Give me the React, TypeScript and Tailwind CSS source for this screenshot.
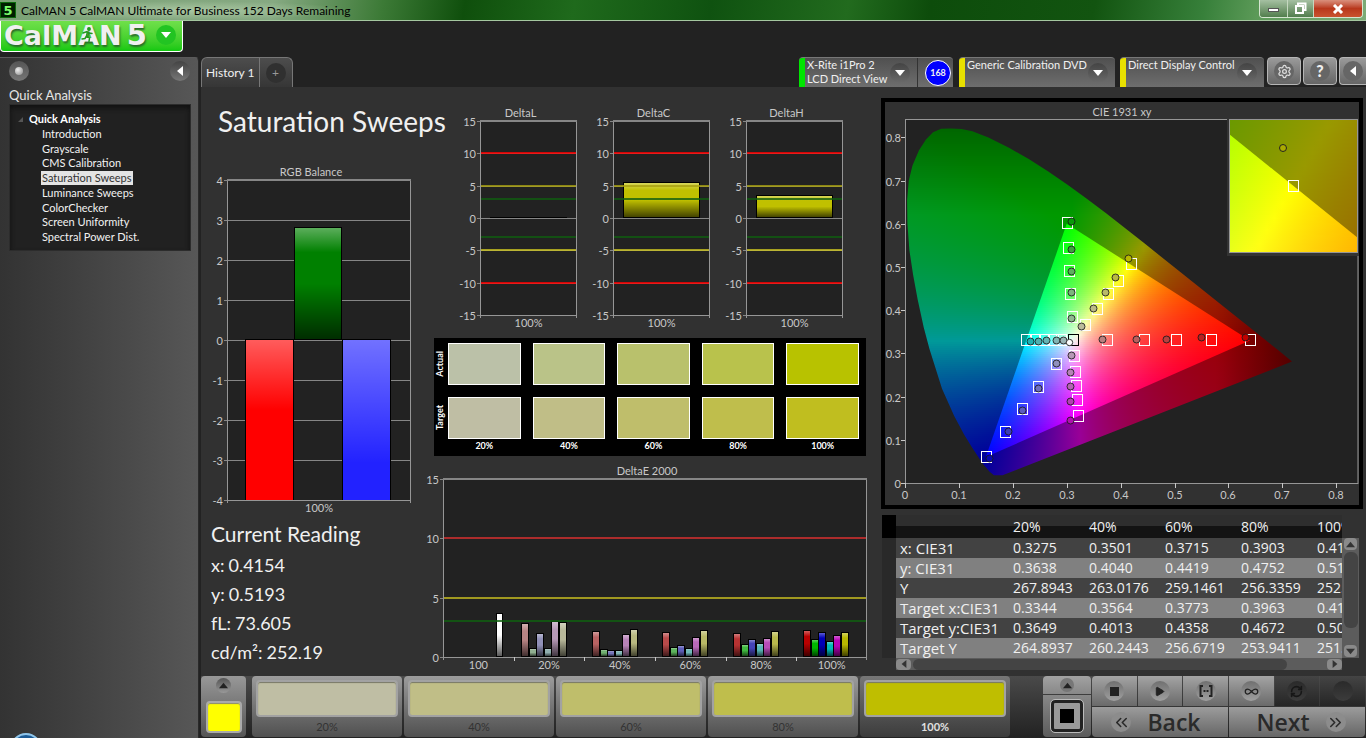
import React, { useId } from "react";
import { ChevronsLeft, ChevronsRight, Infinity as InfinityIcon, Play, RefreshCw, Settings, Square } from "lucide-react";

type Bar = { x: number; width: number; value: number; color: string };
type Limit = { value: number; color: string };

interface BarChartProps {
  title: string;
  width: number;
  height: number;
  plot: { x: number; y: number; width: number; height: number };
  min: number;
  max: number;
  ticks: number[];
  grid?: boolean;
  limits?: Limit[];
  bars: Bar[];
  labels: string[];
}

function BarChart({ title, width, height, plot, min, max, ticks, grid = true, limits = [], bars, labels }: BarChartProps) {
  const id = useId();
  const toY = (v: number) => plot.y + Math.round(((max - v) / (max - min)) * plot.height);
  const step = plot.width / labels.length;
  const right = plot.x + plot.width;
  const bottom = plot.y + plot.height;

  return (
    <svg viewBox={`0 0 ${width} ${height}`} className="block h-auto w-full font-[Lato,sans-serif] text-[11px]" fill="#c8c8c8" shapeRendering="crispEdges" role="img" aria-label={title}>
      <defs>
        <linearGradient id={`${id}-gloss`} x1="0" y1="0" x2="0" y2="1">
          <stop offset="0" stopColor="#fff" stopOpacity="0.36" />
          <stop offset="0.22" stopColor="#fff" stopOpacity="0" />
          <stop offset="0.5" stopColor="#000" stopOpacity="0" />
          <stop offset="1" stopColor="#000" stopOpacity="0.65" />
        </linearGradient>
        <clipPath id={`${id}-clip`}>
          <rect x={plot.x} y={plot.y} width={plot.width} height={plot.height} />
        </clipPath>
      </defs>
      <text x={plot.x + plot.width / 2 - 8} y={plot.y - 4} textAnchor="middle">{title}</text>
      <rect x={plot.x} y={plot.y} width={plot.width} height={plot.height} fill="#222" />
      {ticks.map((t) => (
        <g key={t}>
          <path d={`M${plot.x - 3} ${toY(t) + 0.5}H${grid ? right : plot.x}`} stroke="#868686" />
          <text x={plot.x - 4} y={toY(t) + 5} textAnchor="end">{t}</text>
        </g>
      ))}
      <g clipPath={`url(#${id}-clip)`}>
        {bars.map((b) => {
          const y = Math.min(toY(b.value), toY(0));
          const h = Math.abs(toY(b.value) - toY(0));
          return (
            <g key={b.x}>
              <rect x={plot.x + b.x} y={y - 1} width={b.width} height={h + 1} fill="#000" />
              <rect x={plot.x + b.x + 1} y={y} width={b.width - 2} height={Math.max(h - 1, 0)} fill={b.color} />
              <rect x={plot.x + b.x + 1} y={y} width={b.width - 2} height={Math.max(h - 1, 0)} fill={`url(#${id}-gloss)`} />
            </g>
          );
        })}
      </g>
      {limits.map((l) => (
        <rect key={l.value} x={plot.x} y={toY(l.value) - 1} width={plot.width} height="2" fill={l.color} opacity="0.8" />
      ))}
      <path d={`M${plot.x + 0.5} ${plot.y}V${bottom + 3}M${right - 0.5} ${plot.y}V${bottom + 3}M${plot.x} ${bottom + 0.5}H${right}`} stroke="#969696" />
      <path d={`M${plot.x} ${plot.y}H${right}`} stroke="#868686" strokeWidth="2" />
      {labels.map((l, i) => (
        <g key={l}>
          {i > 0 && <path d={`M${Math.round(plot.x + i * step) + 0.5} ${bottom}v4`} stroke="#c8c8c8" />}
          <text x={plot.x + (i + 0.5) * step} y={bottom + 12} textAnchor="middle">{l}</text>
        </g>
      ))}
    </svg>
  );
}

/* ---------- CIE diagram ---------- */

const WIDTH = 474;
const X0 = 20;
const Y0 = 381;
const SX = 539;
const SY = 432;

const locus: [number, number][] = [
  [0.181, 0.018], [0.165, 0.018], [0.157, 0.026], [0.144, 0.045], [0.1241, 0.083], [0.1096, 0.112], [0.0913, 0.155],
  [0.0687, 0.218], [0.0454, 0.31], [0.0348, 0.36], [0.0235, 0.425], [0.015, 0.482], [0.0082, 0.5384], [0.0045, 0.6], [0.0039, 0.6548],
  [0.007, 0.7], [0.0139, 0.735], [0.026, 0.77], [0.0389, 0.795], [0.052, 0.812], [0.067, 0.82], [0.085, 0.8205], [0.105, 0.8195],
  [0.125, 0.814], [0.1547, 0.8], [0.1929, 0.776], [0.2296, 0.75], [0.2658, 0.721], [0.3016, 0.6903], [0.3373, 0.6579],
  [0.3731, 0.6245], [0.4441, 0.5547], [0.5125, 0.4866], [0.5752, 0.4242], [0.627, 0.3725], [0.6658, 0.334], [0.6915, 0.3083], [0.718, 0.281],
];

function colorAt(x: number, y: number, outside: boolean) {
  const yy = Math.max(y, 0.005);
  const X = x / yy;
  const Z = (1 - x - yy) / yy;
  const lin = [3.2406 * X - 1.5372 - 0.4986 * Z, -0.9689 * X + 1.8758 + 0.0415 * Z, 0.0557 * X - 0.204 + 1.057 * Z].map((v) => Math.max(v, 0));
  const peak = Math.max(...lin) || 1;
  let level = 1;
  if (outside) {
    level = 0.6 - Math.max(0, y - 0.62) * 1 - Math.max(0, x - 0.58) * 2;
  }
  const [r, g, b] = lin.map((v) => Math.round((255 * level * v) / peak));
  return `rgb(${r},${g},${b})`;
}

interface ColorFieldProps {
  left: number;
  top: number;
  width: number;
  height: number;
  toXY: (px: number, py: number) => [number, number];
  outside?: boolean;
}

// Horizontal strips, each with its own gradient
function ColorField({ left, top, width, height, toXY, outside = false }: ColorFieldProps) {
  const id = useId();
  const rows = Array.from({ length: Math.ceil(height / 2) }, (_, i) => top + i * 2);
  const count = Math.ceil(width / 8);
  return (
    <>
      {rows.map((y) => (
        <g key={y}>
          <linearGradient id={`${id}-${y}`}>
            {Array.from({ length: count + 1 }, (_, i) => {
              const [cx, cy] = toXY(left + (i / count) * width, y + 1);
              return <stop key={i} offset={i / count} stopColor={colorAt(cx, cy, outside)} />;
            })}
          </linearGradient>
          <rect x={left} y={y} width={width} height="2" fill={`url(#${id}-${y})`} shapeRendering="crispEdges" />
        </g>
      ))}
    </>
  );
}

const targets: [number, number][] = [
  [182, 121], [183, 146], [184, 169], [185, 192], [187, 215],
  [246, 162], [233, 179], [223, 192], [212, 207], [200, 223],
  [222, 238], [259, 238], [291, 238], [326, 238], [365, 238],
  [141, 238], [150, 238], [159, 238], [168, 238], [176, 238],
  [171, 262], [153, 285], [137, 307], [120, 330], [101, 355],
  [189, 254], [190, 270], [191, 284], [192, 298], [193, 314],
];

const readings: [number, number, string][] = [
  [186, 119, "#0a9a0a"], [186, 147, "#3f9f3f"], [186, 169, "#5fae5f"], [186, 190, "#7db57d"], [186, 216, "#8fb98f"],
  [243, 156, "#b9b900"], [230, 175, "#b8b843"], [220, 190, "#b9b96a"], [208, 206, "#bbbb86"], [196, 224, "#bbbb9c"],
  [217, 237, "#bb8080"], [251, 237, "#b95f5f"], [281, 237, "#b84040"], [316, 235, "#b82020"], [360, 235, "#c00000"],
  [145, 239, "#20b2b2"], [153, 239, "#4fb0b0"], [161, 238, "#66b5b5"], [171, 238, "#82b5b5"], [178, 238, "#9ab5b5"],
  [171, 261, "#9090bd"], [153, 286, "#6f6fbf"], [137, 308, "#5c5cc0"], [123, 329, "#3c3cb8"], [104, 356, "#0808b0"],
  [186, 253, "#b798b7"], [185, 270, "#b782b7"], [185, 284, "#b564b5"], [185, 299, "#b440b4"], [185, 318, "#b010b0"],
];

function CieDiagram() {
  const id = useId();
  const toXY = (px: number, py: number): [number, number] => [(px - X0) / SX, (Y0 - py) / SY];
  const toInsetXY = (px: number, py: number): [number, number] => [0.4193 + (px - 408) / 2600, 0.5053 - (py - 84) / 2680];
  const points = (list: [number, number][]) => list.map(([x, y]) => `${X0 + x * SX},${Y0 - y * SY}`).join(" ");

  return (
    <svg viewBox={`0 0 ${WIDTH} 403`} className="block h-auto w-full font-[Lato,sans-serif] text-[11px]" fill="#c8c8c8" role="img" aria-label="CIE 1931 xy">
      <clipPath id={`${id}-locus`}><polygon points={points(locus)} /></clipPath>
      <clipPath id={`${id}-rgb`}><polygon points={points([[0.64, 0.33], [0.3, 0.6], [0.15, 0.06]])} /></clipPath>
      <clipPath id={`${id}-inset`}><polygon points="344,32 473,136 473,151 344,151" /></clipPath>

      <rect x="20" y="17" width="453" height="364" fill="#222" />
      <text x="237" y="14" textAnchor="middle">CIE 1931 xy</text>
      <g clipPath={`url(#${id}-locus)`}>
        <ColorField left={20} top={24} width={390} height={352} toXY={toXY} outside />
      </g>
      <g clipPath={`url(#${id}-rgb)`}>
        <ColorField left={98} top={118} width={270} height={240} toXY={toXY} />
      </g>

      <path d="M20.5 17V382M20 381.5H473M473 17.5V382M20 17.5H473" stroke="#969696" fill="none" />
      {[0, 1, 2, 3, 4, 5, 6, 7, 8].map((n) => {
        const x = X0 + Math.round(n * SX * 0.1);
        const y = Y0 - Math.round(n * SY * 0.1);
        return (
          <g key={n}>
            <path d={`M${x + 0.5} 381v5M16 ${y + 0.5}h4`} stroke="#c8c8c8" />
            <text x={x} y="397" textAnchor="middle">{n / 10}</text>
            <text x="16" y={y + 5} textAnchor="end">{n / 10}</text>
          </g>
        );
      })}

      <g fill="none" stroke="#fff" shapeRendering="crispEdges">
        {targets.map(([x, y]) => (
          <rect key={`${x}-${y}`} x={x - 4.5} y={y - 5.5} width="10" height="11" />
        ))}
        <rect x="183.5" y="232.5" width="10" height="11" stroke="#000" />
      </g>
      {readings.map(([x, y, c]) => (
        <circle key={`${x}-${y}`} cx={x + 0.5} cy={y + 0.5} r="3.5" fill={c} stroke="#1a1a1a" strokeOpacity="0.85" />
      ))}
      <circle cx="184.5" cy="240.5" r="3.2" fill="#fff" stroke="#333" />

      <rect x="342" y="16" width="133" height="138" fill="#333" />
      <ColorField left={344} top={17} width={129} height={134} toXY={toInsetXY} outside />
      <g clipPath={`url(#${id}-inset)`}>
        <ColorField left={344} top={17} width={129} height={134} toXY={toInsetXY} />
      </g>
      <rect x="344.5" y="17.5" width="128" height="133" fill="none" stroke="#969696" />
      <rect x="403.5" y="78.5" width="10" height="11" fill="none" stroke="#fff" />
      <circle cx="398" cy="46" r="3.5" fill="#aaaa00" stroke="#222" />
    </svg>
  );
}

/* ---------- Data ---------- */

const pages = ["Introduction", "Grayscale", "CMS Calibration", "Saturation Sweeps", "Luminance Sweeps", "ColorChecker", "Screen Uniformity", "Spectral Power Dist."];

const deltaLimits: Limit[] = [
  { value: 10, color: "#ff0000" },
  { value: 5, color: "#a8a010" },
  { value: 3, color: "#105c10" },
  { value: -3, color: "#105c10" },
  { value: -5, color: "#c8c020" },
  { value: -10, color: "#ff0000" },
];

const deltas = [
  { title: "DeltaL", value: 0.05 },
  { title: "DeltaC", value: 5.4 },
  { title: "DeltaH", value: 3.4 },
];

const sweepColors = [
  ["#b88484", "#8fae8f", "#9090b8", "#90aeae", "#b89ab8", "#b8b89a"],
  ["#b86262", "#70b070", "#7474b8", "#80b4b4", "#b882b8", "#b8b880"],
  ["#b84a4a", "#5cb45c", "#5e5eb8", "#70b8b8", "#b868b8", "#b8b866"],
  ["#b83232", "#40b840", "#4444b8", "#58b8b8", "#b84cb8", "#b8b84c"],
  ["#b80000", "#00b800", "#0000b8", "#00b8b8", "#b800b8", "#b8b800"],
];

const sweepValues = [
  [2.78, 0.64, 1.93, 0.64, 2.95, 2.86],
  [2.1, 0.56, 0.47, 0.47, 1.85, 2.27],
  [2.0, 0.8, 0.92, 0.64, 1.6, 2.2],
  [1.93, 1.0, 1.43, 1.1, 1.5, 2.1],
  [2.2, 1.43, 2.0, 1.26, 1.76, 2.0],
];

const sweepBars: Bar[] = [
  { x: 53, width: 7, value: 3.6, color: "#ffffff" },
  ...sweepValues.flatMap((group, g) =>
    group.map((value, i) => ({ x: 78 + Math.round(g * 70.5) + Math.round(i * 7.6), width: 8, value, color: sweepColors[g][i] }))
  ),
];

const levels = [
  { label: "20%", actual: "bg-[#bbc1a8]", target: "bg-[#bfbea4]" },
  { label: "40%", actual: "bg-[#bac388]", target: "bg-[#c0be87]" },
  { label: "60%", actual: "bg-[#b9c16c]", target: "bg-[#bfbe6b]" },
  { label: "80%", actual: "bg-[#b9c24c]", target: "bg-[#bfbe4c]" },
  { label: "100%", actual: "bg-[#b8c200]", target: "bg-[#c0be1f]" },
];

const thumbs = ["bg-[#bfbea4]", "bg-[#c0be87]", "bg-[#bfbe6b]", "bg-[#bfbe4c]", "bg-[#bfbe00]"];

const readingsTable = [
  ["x: CIE31", "0.3275", "0.3501", "0.3715", "0.3903", "0.4154"],
  ["y: CIE31", "0.3638", "0.4040", "0.4419", "0.4752", "0.5193"],
  ["Y", "267.8943", "263.0176", "259.1461", "256.3359", "252.1902"],
  ["Target x:CIE31", "0.3344", "0.3564", "0.3773", "0.3963", "0.4193"],
  ["Target y:CIE31", "0.3649", "0.4013", "0.4358", "0.4672", "0.5053"],
  ["Target Y", "264.8937", "260.2443", "256.6719", "253.9411", "251.5203"],
];

/* ---------- Small parts ---------- */

function Triangle({ dir, className }: { dir: "up" | "down" | "left" | "right"; className: string }) {
  const paths = { up: "M0 8L5 2L10 8Z", down: "M0 2L5 8L10 2Z", left: "M8 0L2 5L8 10Z", right: "M2 0L8 5L2 10Z" };
  return (
    <svg viewBox="0 0 10 10" className={className} fill="currentColor" aria-hidden="true">
      <path d={paths[dir]} />
    </svg>
  );
}

function Device({ lines, accent, width, children }: { lines: string[]; accent: string; width: string; children?: React.ReactNode }) {
  return (
    <div className={`flex h-[30px] overflow-hidden rounded-t border-t border-[#777] bg-gradient-to-b from-[#505050] to-[#6e6e6e] ${width}`}>
      <div className={`w-[6px] shrink-0 ${accent}`} />
      <button type="button" className="flex min-w-0 flex-1 items-start justify-between pr-[7px] pl-[2px] text-left">
        <span className="text-[11px] leading-[14px] whitespace-nowrap">
          {lines.map((l) => <span key={l} className="block">{l}</span>)}
        </span>
        <span className="mt-[5px] flex size-5 shrink-0 items-center justify-center rounded-full bg-gradient-to-b from-[#444] to-[#6a6a6a]">
          <Triangle dir="down" className="size-[10px] text-white" />
        </span>
      </button>
      {children}
    </div>
  );
}

function TransportButton({ label, dark, children }: { label: string; dark?: boolean; children?: React.ReactNode }) {
  return (
    <button
      type="button"
      aria-label={label}
      className={`flex h-[30px] items-center justify-center text-[#222] ${dark ? "bg-gradient-to-b from-[#444] to-[#262626]" : "bg-gradient-to-b from-[#a4a4a4] to-[#6a6a6a]"}`}
    >
      <span className={`flex size-5 items-center justify-center rounded-full ${dark ? "bg-gradient-to-b from-[#2a2a2a] to-[#3c3c3c]" : "bg-gradient-to-b from-[#707070] to-[#a0a0a0]"}`}>
        {children}
      </span>
    </button>
  );
}

function TitleBar() {
  return (
    <header className="flex h-[21px] justify-between border-b border-[#a5c8a0] bg-[linear-gradient(100deg,#7ba276_0%,#86a982_20%,#3c7a36_28%,#0f4f0c_34%,#1f6a1c_42%,#0f5210_52%,#226b1e_62%,#0d4c0b_68%,#125410_80%,#37803a_88%,#5c9a58_92%,#7dab77_100%)]">
      <div className="flex items-center gap-[5px] text-black">
        <span className="flex size-4 items-center justify-center border border-[#0c6b0c] bg-[#001f00] font-['DejaVu_Sans',sans-serif] text-[13px] leading-none font-bold text-[#7dff6b]">5</span>
        <span className="bg-[radial-gradient(closest-side,rgba(200,225,190,0.55),transparent)] pt-px text-[12px] whitespace-nowrap">CalMAN 5 CalMAN Ultimate for Business 152 Days Remaining</span>
      </div>
      <div className="mr-[3px] flex h-[18px] overflow-hidden rounded-b border border-t-0 border-[#d5e5d0] text-white">
        <button type="button" aria-label="Minimize" className="flex w-[28px] items-end justify-center border-r border-[#c5d8c0] bg-gradient-to-b from-[#a5c0a2] to-[#527e4d] pb-[5px]">
          <span className="h-[4px] w-[11px] border border-[#555] bg-white" />
        </button>
        <button type="button" aria-label="Restore" className="flex w-[26px] items-center justify-center border-r border-[#c5d8c0] bg-gradient-to-b from-[#a5c0a2] to-[#527e4d]">
          <svg viewBox="0 0 13 13" className="size-[13px]" fill="none" stroke="#fff" strokeWidth="2"><path d="M4 3V1.500H11.500V8H10" /><rect x="2" y="4" width="7" height="7" /></svg>
        </button>
        <button type="button" aria-label="Close" className="flex w-[48px] items-center justify-center bg-gradient-to-b from-[#d98f7c] via-[#b8371b] to-[#c9532f]">
          <svg viewBox="0 0 12 10" className="h-[10px] w-[12px]" stroke="#fff" strokeWidth="3"><path d="M2 1L10 9M10 1L2 9" /></svg>
        </button>
      </div>
    </header>
  );
}

function Sidebar() {
  return (
    <aside className="relative w-[199px] shrink-0 overflow-hidden rounded-tr border-t border-r border-[#2a2a2a] border-t-[#5a5a5a] bg-gradient-to-r from-[#333] to-[#575757]">
      <div className="flex items-center justify-between pt-[3px] pr-2 pl-[9px]">
        <button type="button" aria-label="Record" className="flex size-5 items-center justify-center rounded-full bg-gradient-to-b from-[#555] to-[#777]">
          <span className="size-2 rounded-full bg-[radial-gradient(circle_at_35%_35%,#eee,#888)]" />
        </button>
        <button type="button" aria-label="Collapse" className="flex size-5 items-center justify-center rounded-full bg-gradient-to-b from-[#444] to-[#777]">
          <Triangle dir="left" className="size-[10px] text-white" />
        </button>
      </div>
      <h2 className="mt-[6px] pl-[9px] text-[13px] leading-[17px] text-[#e6e6e6]">Quick Analysis</h2>
      <nav className="mr-[7px] ml-[9px] h-[147px] border border-[#2c2c2c] bg-[#212121] pt-[6px] shadow-[inset_0_3px_5px_#111]">
        <div className="flex items-center pl-2 text-[11px] leading-[16px] font-bold text-white">
          <svg viewBox="0 0 6 6" className="mr-[6px] size-[5px]" fill="#555"><path d="M6 0V6H0Z" /></svg>
          Quick Analysis
        </div>
        <ul className="flex h-[117px] flex-col justify-between pl-[31px] text-[11px] leading-[14px] text-[#f2f2f2]">
          {pages.map((p) => (
            <li key={p} className="flex">
              <a href="#" className={p === "Saturation Sweeps" ? "bg-[#e4e4e4] px-px text-[#333]" : "px-px"}>{p}</a>
            </li>
          ))}
        </ul>
      </nav>
      <div className="absolute -bottom-[27px] left-[10px] size-8 rounded-full border-2 border-[#8fc5ea] bg-[#1c5a94]" />
    </aside>
  );
}

function Toolbar() {
  return (
    <div className="flex h-[30px] items-start bg-[#222]">
      <div className="flex h-[30px] rounded-t-md border border-b-0 border-[#777] bg-gradient-to-b from-[#4d4d4d] to-[#363636]">
        <button type="button" className="border-r border-[#777] px-1 text-[12px] whitespace-nowrap">History 1</button>
        <button type="button" aria-label="Add history" className="flex w-8 items-center justify-center">
          <span className="flex size-5 items-center justify-center rounded-full bg-[#303030] text-[12px] text-[#999]">+</span>
        </button>
      </div>
      <div className="flex-1" />
      <Device lines={["X-Rite i1Pro 2", "LCD Direct View"]} accent="bg-[#00e600]" width="w-[154px]">
        <div className="flex w-[36px] items-center justify-end border-l border-[#333] pr-[2px]">
          <span className="flex size-[26px] items-center justify-center rounded-full border border-white bg-[#0000ff] text-[9px] font-bold">168</span>
        </div>
      </Device>
      <div className="w-[6px]" />
      <Device lines={["Generic Calibration DVD"]} accent="bg-[#e8e000]" width="w-[156px]" />
      <div className="w-[5px]" />
      <Device lines={["Direct Display Control"]} accent="bg-[#e8e000]" width="w-[144px]" />
      <div className="ml-[3px] flex gap-[2px]">
        <button type="button" aria-label="Settings" className="flex h-7 w-[34px] items-center justify-center rounded border border-[#b5b5b5] bg-gradient-to-b from-[#9a9a9a] to-[#666]">
          <span className="flex size-5 items-center justify-center rounded-full bg-[#666]"><Settings size={15} color="#ddd" /></span>
        </button>
        <button type="button" aria-label="Help" className="flex h-7 w-[34px] items-center justify-center rounded border border-[#b5b5b5] bg-gradient-to-b from-[#9a9a9a] to-[#666]">
          <span className="flex size-5 items-center justify-center rounded-full bg-[#666] text-[16px] leading-none font-black">?</span>
        </button>
        <button type="button" aria-label="Collapse toolbar" className="flex h-7 w-[27px] items-center justify-center rounded-l border border-r-0 border-[#b5b5b5] bg-gradient-to-b from-[#9a9a9a] to-[#666]">
          <span className="flex size-5 items-center justify-center rounded-full bg-[#666]"><Triangle dir="left" className="size-[10px] text-white" /></span>
        </button>
      </div>
    </div>
  );
}

function SwatchPanel() {
  return (
    <div className="mt-[7px] mr-[2px] ml-[6px] h-[118px] bg-black pt-[5px] pr-[7px] text-[9px] font-bold text-white">
      <div className="grid grid-cols-[14px_1fr] gap-y-3">
        <div className="flex items-center justify-center pr-[3px] [writing-mode:vertical-rl]"><span className="rotate-180">Actual</span></div>
        <div className="grid grid-cols-5 gap-3">
          {levels.map((l) => <div key={l.label} className={`h-[42px] border border-white ${l.actual}`} />)}
        </div>
        <div className="flex items-center justify-center pr-[3px] [writing-mode:vertical-rl]"><span className="rotate-180">Target</span></div>
        <div className="grid grid-cols-5 gap-3">
          {levels.map((l) => <div key={l.label} className={`h-[42px] border border-white ${l.target}`} />)}
        </div>
      </div>
      <div className="ml-[14px] grid grid-cols-5 gap-3 text-center leading-[14px]">
        {levels.map((l) => <span key={l.label}>{l.label}</span>)}
      </div>
    </div>
  );
}

function DataTable() {
  return (
    <div className="mt-[6px] mr-1 ml-px">
      <div className="flex">
        <div className="min-w-0 flex-1 overflow-hidden">
          <table className="w-[511px] table-fixed border-collapse text-left font-['Open_Sans',sans-serif] text-[14px] whitespace-nowrap text-[#f0f0f0]">
            <colgroup>
              <col className="w-[14px]" />
              <col className="w-[117px]" />
              {levels.map((l) => <col key={l.label} className="w-[76px]" />)}
            </colgroup>
            <thead>
              <tr className="h-[23px] bg-[linear-gradient(#2e2e2e_50%,#131313_50%)] leading-none">
                <th className="bg-black p-0" />
                <th className="p-0" />
                {levels.map((l) => <th key={l.label} className="p-0 font-medium">{l.label}</th>)}
              </tr>
            </thead>
            <tbody>
              {readingsTable.map((row, r) => (
                <tr key={row[0]} className={`h-5 leading-5 ${r % 2 ? "bg-[#808080]" : "bg-[#424242]"}`}>
                  <td className="bg-[#292929] p-0" />
                  {row.map((cell, c) => <td key={c} className={c === 0 ? "p-0 pl-1 text-[15px]" : "p-0"}>{cell}</td>)}
                </tr>
              ))}
            </tbody>
          </table>
        </div>
        <div className="mt-[23px] flex w-[17px] flex-col items-center bg-[#5c5c5c]">
          <button type="button" aria-label="Scroll up" className="flex h-3 w-[13px] items-center justify-center rounded-sm bg-[#8a8a8a]"><Triangle dir="up" className="size-[9px] text-[#333]" /></button>
          <div className="mt-[2px] h-[76px] w-[14px] rounded-md bg-[#444]" />
          <div className="flex-1" />
          <button type="button" aria-label="Scroll down" className="mb-px flex h-3 w-[13px] items-center justify-center rounded-sm bg-[#8a8a8a]"><Triangle dir="down" className="size-[9px] text-[#333]" /></button>
        </div>
      </div>
      <div className="mr-[17px] ml-[14px] flex h-3 items-center bg-[#5c5c5c]">
        <button type="button" aria-label="Scroll left" className="flex h-[11px] w-[15px] items-center justify-center rounded-sm bg-[#8a8a8a]"><Triangle dir="left" className="size-[8px] text-[#333]" /></button>
        <div className="ml-[2px] h-[11px] w-[374px] rounded-md bg-[#444]" />
        <div className="flex-1" />
        <button type="button" aria-label="Scroll right" className="flex h-[11px] w-[15px] items-center justify-center rounded-sm bg-[#8a8a8a]"><Triangle dir="right" className="size-[8px] text-[#333]" /></button>
      </div>
    </div>
  );
}

function BottomBar() {
  return (
    <footer className="mt-auto flex h-[62px] bg-gradient-to-b from-[#4a4a4a] to-[#222]">
      <button type="button" aria-label="Pattern color" className="mr-[6px] flex h-[61px] w-[45px] shrink-0 flex-col items-center rounded bg-gradient-to-b from-[#989898] to-[#555] pt-[2px]">
        <span className="flex size-[15px] items-center justify-center rounded-full bg-gradient-to-b from-[#555] to-[#999]"><Triangle dir="up" className="size-[9px] text-[#222]" /></span>
        <span className="mt-2 h-8 w-9 rounded border-2 border-[#aaa] bg-[#ffff00] shadow-[inset_0_1px_1px_#887]" />
      </button>
      <div className="flex min-w-0 flex-1 gap-[2px] pr-[33px]">
        {levels.map((l, i) => {
          const active = l.label === "100%";
          return (
            <button
              key={l.label}
              type="button"
              className={`flex h-[61px] min-w-0 flex-1 flex-col rounded px-[4px] pt-[4px] text-[11px] ${active ? "bg-gradient-to-b from-[#777] to-[#3c3c3c] font-bold text-[#e0e0e0]" : "bg-gradient-to-b from-[#9c9c9c] to-[#505050] text-[#333]"}`}
            >
              <span className={`h-[38px] w-full rounded border-2 border-[#a2a2a2] shadow-[inset_0_1px_1px_#776] ${thumbs[i]}`} />
              <span className="w-full text-center leading-[20px]">{l.label}</span>
            </button>
          );
        })}
      </div>
      <div className="mr-px flex w-12 shrink-0 flex-col gap-px">
        <button type="button" aria-label="Expand" className="flex h-[18px] items-center justify-center rounded-t bg-gradient-to-b from-[#a2a2a2] to-[#888]">
          <span className="flex size-[14px] items-center justify-center rounded-full bg-[#777]"><Triangle dir="up" className="size-[9px] text-[#222]" /></span>
        </button>
        <button type="button" aria-label="Pattern window" className="flex h-[42px] items-center justify-center rounded-b bg-gradient-to-b from-[#888] to-[#5c5c5c]">
          <span className="flex size-8 items-center justify-center rounded border-[3px] border-[#222] bg-[#999] outline outline-[#bbb]"><span className="size-[14px] bg-black" /></span>
        </button>
      </div>
      <div className="mr-px grid h-[61px] w-[273px] shrink-0 grid-cols-6 gap-px overflow-hidden rounded">
        <TransportButton label="Stop"><Square size={9} fill="#222" strokeWidth={0} className="bg-[#222]" /></TransportButton>
        <TransportButton label="Play"><Play size={11} fill="#222" /></TransportButton>
        <TransportButton label="Read series">
          <svg viewBox="0 0 14 12" className="h-3 w-[14px]" fill="none" stroke="#222" strokeWidth="2"><path d="M4 1H1.500V11H4M10 1H12.500V11H10M4.500 6H6M6.500 6H7.500M8 6H9.500" /></svg>
        </TransportButton>
        <TransportButton label="Read continuous"><InfinityIcon size={15} /></TransportButton>
        <TransportButton label="Repeat" dark><RefreshCw size={13} strokeWidth={3} color="#171717" /></TransportButton>
        <TransportButton label="Record" dark />
        <button type="button" className="col-span-3 flex h-[30px] items-center justify-center gap-4 bg-gradient-to-b from-[#9c9c9c] to-[#666] pr-2 font-['Open_Sans',sans-serif] text-[23px] leading-none font-semibold text-[#2a2a2a]">
          <span className="flex size-5 items-center justify-center rounded-full bg-[#8c8c8c]"><ChevronsLeft size={19} /></span>
          Back
        </button>
        <button type="button" className="col-span-3 flex h-[30px] items-center justify-center gap-4 bg-gradient-to-b from-[#9c9c9c] to-[#666] pl-2 font-['Open_Sans',sans-serif] text-[23px] leading-none font-semibold text-[#2a2a2a]">
          Next
          <span className="flex size-5 items-center justify-center rounded-full bg-[#8c8c8c]"><ChevronsRight size={19} /></span>
        </button>
      </div>
    </footer>
  );
}

export default function App() {
  return (
    <div className="flex min-h-screen flex-col overflow-hidden bg-[#222] font-[Lato,sans-serif] text-[#f0f0f0]">
      <TitleBar />
      <div className="h-9">
        <button type="button" className="relative flex h-[31px] w-[183px] items-center rounded-b border border-t-0 border-white bg-gradient-to-b from-[#6fe04a] to-[#10c810] pb-[2px] pl-[3px] font-['DejaVu_Sans',sans-serif] text-[27px] leading-none font-bold text-[#f0f0f0] [text-shadow:1px_2px_2px_#2a6a2a]">
          CalMAN
          <span className="ml-[5px] text-[29px]">5</span>
          <span className="ml-auto mr-[6px] flex size-5 items-center justify-center rounded-full bg-[#22c422]">
            <Triangle dir="down" className="size-[10px] text-white" />
          </span>
          <svg viewBox="0 0 14 16" className="absolute top-[6px] left-[79px] h-4 w-[14px]" fill="none" stroke="#1f9a1f" strokeWidth="1.500" strokeLinecap="round">
            <circle cx="9" cy="2" r="1.200" fill="#1f9a1f" />
            <path d="M3 6L7 4.500L9 6L12 6.500M7.500 5L6.500 9L9.500 11L9 14.500M6.500 9L5 11.500L2 12" />
          </svg>
        </button>
      </div>

      <div className="flex flex-1">
        <Sidebar />
        <div className="ml-px flex min-w-0 flex-1 flex-col border-l border-[#222] bg-[#313131]">
          <Toolbar />

          <main className="grid grid-cols-[227fr_440fr_498fr]">
            {/* Balance and current reading */}
            <section className="min-w-0 pt-4">
              <h1 className="pl-[17px] text-[28px] leading-9 whitespace-nowrap">Saturation Sweeps</h1>
              <div className="mt-[26px]">
                <BarChart
                  title="RGB Balance"
                  width={227}
                  height={352}
                  plot={{ x: 26, y: 15, width: 184, height: 320 }}
                  min={-4}
                  max={4}
                  ticks={[4, 3, 2, 1, 0, -1, -2, -3, -4]}
                  bars={[
                    { x: 18, width: 49, value: -8, color: "#ff0000" },
                    { x: 67, width: 48, value: 2.8, color: "#008000" },
                    { x: 115, width: 49, value: -14, color: "#2222ff" },
                  ]}
                  labels={["100%"]}
                />
              </div>
              <h2 className="pl-[10px] text-[21px] leading-[34px]">Current Reading</h2>
              <dl className="pl-[10px] text-[18px] leading-[29px]">
                <div className="flex gap-1"><dt>x:</dt><dd>0.4154</dd></div>
                <div className="flex gap-1"><dt>y:</dt><dd>0.5193</dd></div>
                <div className="flex gap-1"><dt>fL:</dt><dd>73.605</dd></div>
                <div className="flex gap-1"><dt>cd/m²:</dt><dd>252.19</dd></div>
              </dl>
            </section>

            {/* Delta charts */}
            <section className="min-w-0 pt-[18px]">
              <div className="grid grid-cols-3 pr-4 pl-[25px]">
                {deltas.map((d) => (
                  <BarChart
                    key={d.title}
                    title={d.title}
                    width={133}
                    height={226}
                    plot={{ x: 27, y: 16, width: 97, height: 194 }}
                    min={-15}
                    max={15}
                    ticks={[15, 10, 5, 0, -5, -10, -15]}
                    limits={deltaLimits}
                    bars={[{ x: 10, width: 77, value: d.value, color: "#c0c000" }]}
                    labels={["100%"]}
                  />
                ))}
              </div>
              <SwatchPanel />
              <div className="mt-[6px] -ml-2">
                <BarChart
                  title="DeltaE 2000"
                  width={448}
                  height={210}
                  plot={{ x: 23, y: 17, width: 424, height: 178 }}
                  min={0}
                  max={15}
                  ticks={[15, 10, 5, 0]}
                  grid={false}
                  limits={[{ value: 10, color: "#d03030" }, { value: 5, color: "#c0b820" }, { value: 3, color: "#106010" }]}
                  bars={sweepBars}
                  labels={["100", "20%", "40%", "60%", "80%", "100%"]}
                />
              </div>
            </section>

            {/* Chromaticity and values */}
            <section className="min-w-0 pt-[11px] pr-[3px] pl-[13px]">
              <div className="border-4 border-black">
                <CieDiagram />
              </div>
              <DataTable />
            </section>
          </main>

          <BottomBar />
        </div>
      </div>
    </div>
  );
}
